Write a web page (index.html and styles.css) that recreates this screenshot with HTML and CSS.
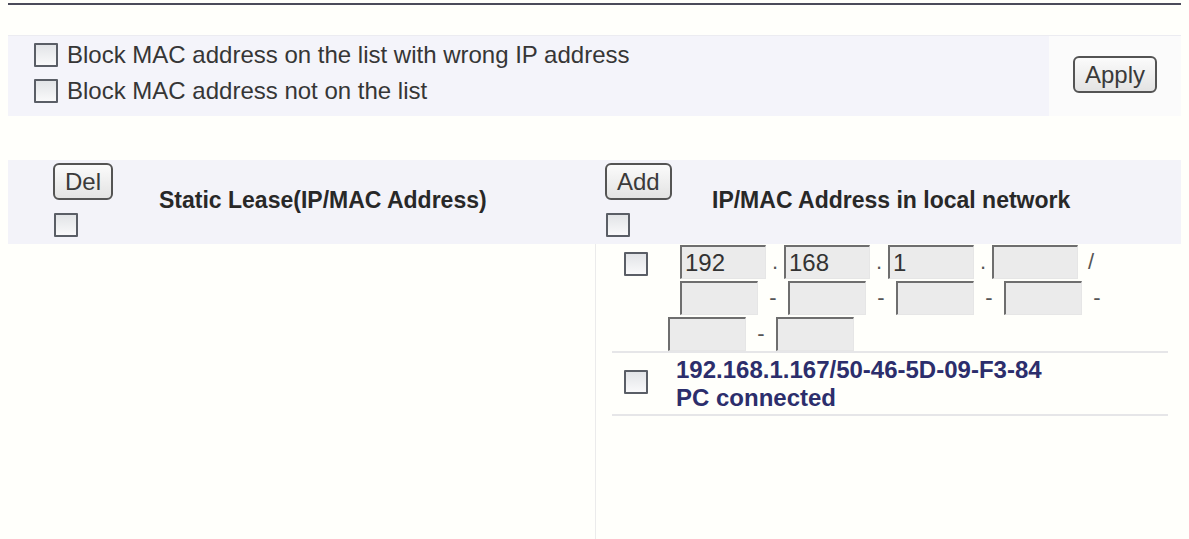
FILE: index.html
```html
<!DOCTYPE html>
<html lang="en">
<head>
<meta charset="utf-8">
<title>IP/MAC Binding</title>
<link rel="stylesheet" href="styles.css">
</head>
<body>
  <div class="topline"></div>

  <form class="options">
    <div class="opt-list">
      <label class="opt"><input type="checkbox" class="cb">Block MAC address on the list with wrong IP address</label>
      <label class="opt"><input type="checkbox" class="cb">Block MAC address not on the list</label>
    </div>
    <div class="opt-apply"><button type="button" class="btn">Apply</button></div>
  </form>

  <div class="lease">
    <div class="head head-left">
      <div class="ctrl">
        <button type="button" class="btn">Del</button>
        <input type="checkbox" class="cb cb-head">
      </div>
      <div class="htitle">Static Lease(IP/MAC Address)</div>
    </div>
    <div class="head head-right">
      <div class="ctrl">
        <button type="button" class="btn">Add</button>
        <input type="checkbox" class="cb cb-head">
      </div>
      <div class="htitle">IP/MAC Address in local network</div>
    </div>

    <div class="body body-left"></div>
    <div class="body body-right">
      <div class="row row-edit">
        <div class="cbcell"><input type="checkbox" class="cb cb-edit"></div>
        <div class="ipgrid">
          <div class="line indent">
            <input class="ipf" value="192"><span class="sep dot">.</span>
            <input class="ipf" value="168"><span class="sep dot">.</span>
            <input class="ipf" value="1"><span class="sep dot">.</span>
            <input class="ipf" value=""><span class="sep slash">/</span>
          </div>
          <div class="line indent">
            <input class="ipf narrow" value=""><span class="sep dash">-</span>
            <input class="ipf narrow" value=""><span class="sep dash">-</span>
            <input class="ipf narrow" value=""><span class="sep dash">-</span>
            <input class="ipf narrow" value=""><span class="sep dash">-</span>
          </div>
          <div class="line">
            <input class="ipf narrow" value=""><span class="sep dash">-</span>
            <input class="ipf narrow" value="">
          </div>
        </div>
      </div>
      <div class="row row-info">
        <div class="cbcell"><input type="checkbox" class="cb"></div>
        <div class="info">
          <div>192.168.1.167/50-46-5D-09-F3-84</div>
          <div>PC connected</div>
        </div>
      </div>
    </div>
  </div>
</body>
</html>
```

FILE: styles.css
```css
* { box-sizing: border-box; }

html, body { margin: 0; }

body {
  padding: 3px 8px 0 8px;
  background: #fffffb;
  font-family: "Liberation Sans", Arial, sans-serif;
  color: #333;
  overflow: hidden;
  height: 539px;
}

.topline {
  height: 2px;
  background: #4b4b5a;
}

/* options box */
.options {
  margin: 30px 0 0 0;
  display: flex;
  height: 81px;
  background: #f4f4fa;
  border-top: 1px solid #ececf1;
}

.opt-list {
  flex: 1;
  padding: 1px 0 0 26px;
}

.opt {
  display: flex;
  align-items: center;
  height: 36px;
  font-size: 24px;
  color: #363636;
}

.cb {
  appearance: none;
  -webkit-appearance: none;
  width: 24px;
  height: 24px;
  margin: 0 9px 0 0;
  border: 2px solid #5a5e66;
  border-radius: 1px;
  background: linear-gradient(#e2e4e7, #f9f9fa);
  flex: none;
}

.opt-apply {
  width: 132px;
  background: #fbfbfb;
  display: flex;
  align-items: center;
  justify-content: center;
  padding-bottom: 4px;
}

.btn {
  height: 37px;
  padding: 0 10px;
  border: 2px solid #545454;
  border-radius: 6px;
  background: linear-gradient(#fbfbfb, #e3e3e3);
  font-family: "Liberation Sans", Arial, sans-serif;
  font-size: 24px;
  color: #3a3a3a;
  line-height: 31px;
}

/* lease table */
.lease {
  margin-top: 44px;
  display: grid;
  grid-template-columns: 587px 1fr;
}

.head {
  background: #f3f3f9;
  height: 84px;
  display: flex;
  align-items: center;
  padding-bottom: 4px;
}

.head-left { padding-left: 45px; }
.head-right { padding-left: 10px; }

.ctrl {
  width: 106px;
  align-self: flex-start;
  padding-top: 3px;
  display: flex;
  flex-direction: column;
  align-items: flex-start;
  gap: 13px;
}

.head-right .ctrl { width: 107px; }

.cb-head { margin-left: 1px; }

.htitle {
  font-weight: bold;
  font-size: 23px;
  color: #282828;
}

.body { height: 295px; }

.body-right {
  border-left: 1px solid #ebebeb;
}

.row {
  margin: 0 13px 0 16px;
  display: flex;
  border-bottom: 2px solid #e6e6e8;
}

.cbcell {
  width: 56px;
  padding-left: 12px;
  flex: none;
}

.row-edit { padding-top: 1px; }

.cb-edit { margin-top: 7px; }

.ipgrid {
  display: flex;
  flex-direction: column;
  gap: 2px;
}

.line {
  display: flex;
  align-items: center;
  height: 34px;
}

.line.indent { padding-left: 12px; }

.ipf {
  width: 86px;
  height: 34px;
  margin: 0;
  padding: 0 3px;
  border-top: 2px solid #6e6e6e;
  border-left: 2px solid #6e6e6e;
  border-right: 1px solid #e6e6e6;
  border-bottom: 1px solid #e6e6e6;
  background: #ebebeb;
  font-family: "Liberation Sans", Arial, sans-serif;
  font-size: 24px;
  color: #333;
}

.ipf.narrow { width: 78px; }

.sep {
  font-size: 22px;
  color: #555;
  text-align: center;
  line-height: 34px;
}

.dot { width: 18px; }
.slash { width: 26px; }
.dash { width: 30px; }

.row-info {
  align-items: center;
  padding: 3px 0 2px;
}

.info {
  padding-left: 8px;
  font-size: 24px;
  font-weight: bold;
  line-height: 28px;
  color: #2c2e6c;
}
```
